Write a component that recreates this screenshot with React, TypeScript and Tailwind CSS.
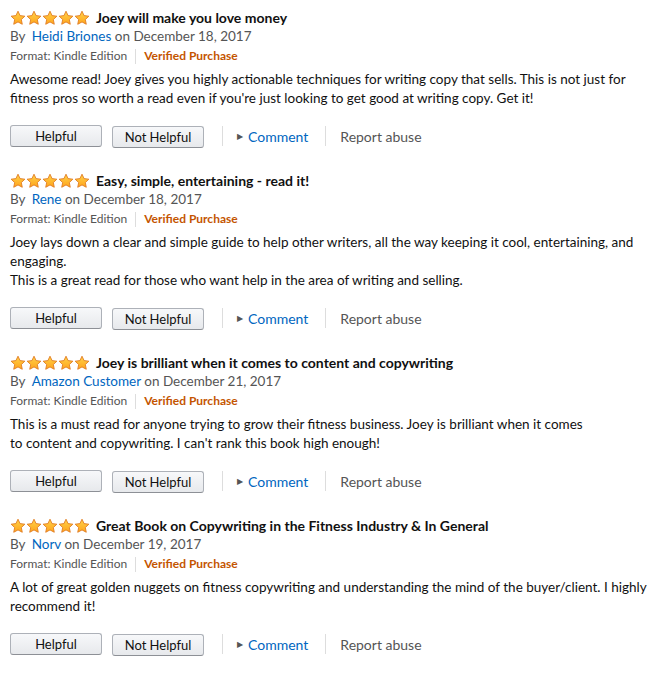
import React from 'react'

interface Review {
  title: string
  author: string
  date: string
  lines: string[]
}

// lines are broken where the reference breaks them
const reviews: Review[] = [
  {
    title: 'Joey will make you love money',
    author: 'Heidi Briones',
    date: 'December 18, 2017',
    lines: [
      'Awesome read! Joey gives you highly actionable techniques for writing copy that sells. This is not just for',
      "fitness pros so worth a read even if you're just looking to get good at writing copy. Get it!",
    ],
  },
  {
    title: 'Easy, simple, entertaining - read it!',
    author: 'Rene',
    date: 'December 18, 2017',
    lines: [
      'Joey lays down a clear and simple guide to help other writers, all the way keeping it cool, entertaining, and',
      'engaging.',
      'This is a great read for those who want help in the area of writing and selling.',
    ],
  },
  {
    title: 'Joey is brilliant when it comes to content and copywriting',
    author: 'Amazon Customer',
    date: 'December 21, 2017',
    lines: [
      'This is a must read for anyone trying to grow their fitness business. Joey is brilliant when it comes',
      "to content and copywriting. I can't rank this book high enough!",
    ],
  },
  {
    title: 'Great Book on Copywriting in the Fitness Industry & In General',
    author: 'Norv',
    date: 'December 19, 2017',
    lines: [
      'A lot of great golden nuggets on fitness copywriting and understanding the mind of the buyer/client. I highly',
      'recommend it!',
    ],
  },
]

function Star({ id }: { id: string }) {
  return (
    <svg width="16" height="16" viewBox="0 0 24 24" className="shrink-0">
      <defs>
        <linearGradient id={id} x1="0" y1="0" x2="0" y2="1">
          <stop offset="0" stopColor="#ffd24a" />
          <stop offset="1" stopColor="#ffa41c" />
        </linearGradient>
      </defs>
      <path
        d="M12 1.8l3.1 6.6 7.2.9-5.3 5 1.4 7.1L12 17.9l-6.4 3.5 1.4-7.1-5.3-5 7.2-.9z"
        fill={`url(#${id})`}
        stroke="#de7921"
        strokeWidth="1.3"
        strokeLinejoin="round"
      />
    </svg>
  )
}

function Stars({ idx }: { idx: number }) {
  return (
    <div className="flex">
      {[0, 1, 2, 3, 4].map((i) => (
        <Star key={i} id={`g-${idx}-${i}`} />
      ))}
    </div>
  )
}

function Btn({ label }: { label: string }) {
  return (
    <button className="h-[22px] w-[92px] rounded-[3px] border border-[#adb1b8] border-b-[#8d9096] bg-gradient-to-b from-[#f7f8fa] to-[#e7e9ec] text-[13px] leading-[20px] text-[#111]">
      {label}
    </button>
  )
}

function ReviewItem({ r, idx }: { r: Review; idx: number }) {
  return (
    <div className="pb-[24px]">
      <div className="flex h-[19px] items-center gap-[6px]">
        <Stars idx={idx} />
        <span className="text-[14px] font-bold text-[#111]">{r.title}</span>
      </div>
      <div className="h-[19px] text-[13.5px] leading-[19px] text-[#555]">
        By <a className="ml-[3px] text-[#0066c0]">{r.author}</a> on {r.date}
      </div>
      <div className="flex h-[20px] items-center text-[12px] text-[#555]">
        <span>Format: Kindle Edition</span>
        <span className="mx-[8px] h-[15px] w-px bg-[#ddd]" />
        <span className="font-bold text-[#c45500]">Verified Purchase</span>
      </div>
      <div className="mt-[4px] text-[13.5px] leading-[19px] text-[#111]">
        {r.lines.map((l, i) => (
          <div key={i} className="whitespace-nowrap">
            {l}
          </div>
        ))}
      </div>
      <div className="mt-[17px] flex h-[22px] items-center">
        <Btn label="Helpful" />
        <div className="ml-[10px]">
          <Btn label="Not Helpful" />
        </div>
        <span className="ml-[18px] h-[20px] w-px bg-[#ddd]" />
        <span className="ml-[14px] text-[8px] text-[#555]">▶</span>
        <a className="ml-[5px] text-[14px] text-[#0066c0]">Comment</a>
        <span className="ml-[17px] h-[20px] w-px bg-[#ddd]" />
        <a className="ml-[14px] text-[14px] text-[#555]">Report abuse</a>
      </div>
    </div>
  )
}

export default function App() {
  return (
    <div className="min-h-[674px] bg-white pl-[10px] pr-[10px] pt-[8px] font-['Lato',sans-serif]">
      {reviews.map((r, i) => (
        <ReviewItem key={i} r={r} idx={i} />
      ))}
    </div>
  )
}
